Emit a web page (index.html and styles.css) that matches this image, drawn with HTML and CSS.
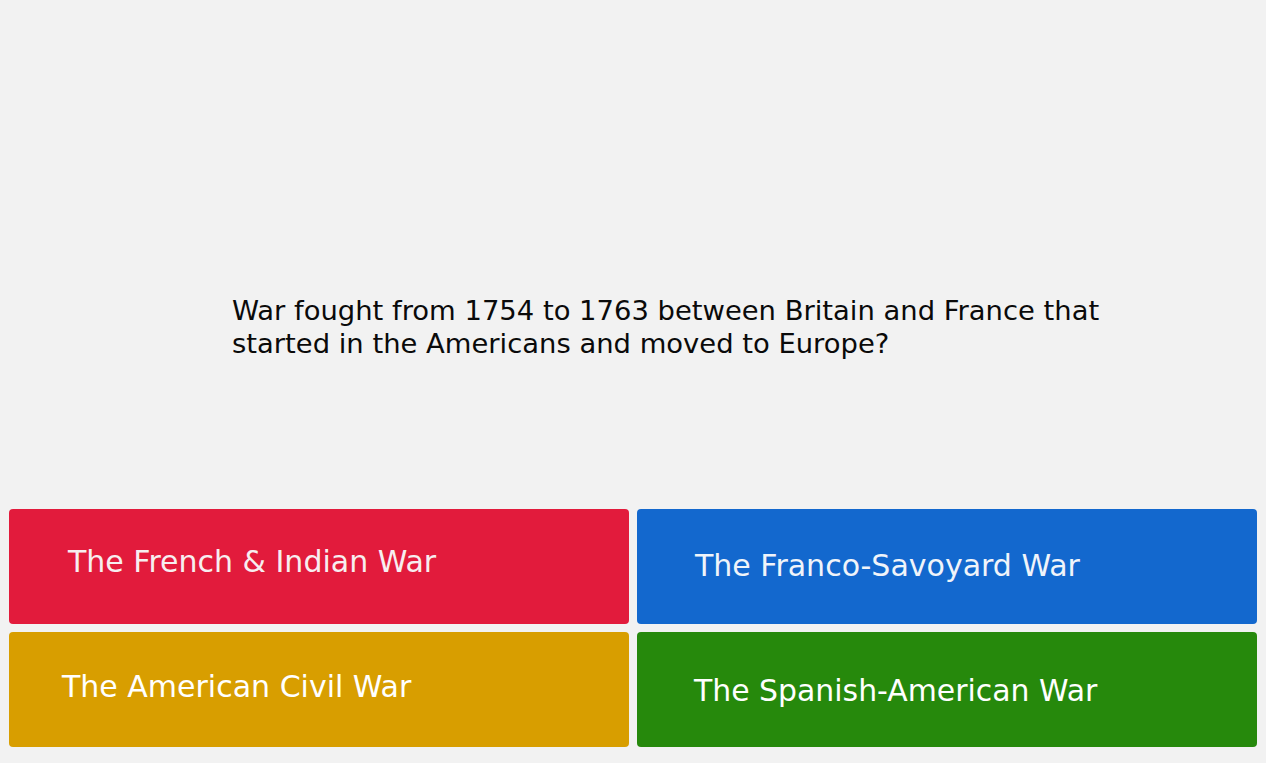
FILE: index.html
```html
<!DOCTYPE html>
<html>
<head>
<meta charset="utf-8">
<link rel="stylesheet" href="styles.css">
</head>
<body>
<main class="page">
  <section class="question-area">
    <p class="question">War fought from 1754 to 1763 between Britain and France that started in the Americans and moved to Europe?</p>
  </section>
  <section class="answers">
    <div class="answer red"><span>The French &amp; Indian War</span></div>
    <div class="answer blue"><span>The Franco-Savoyard War</span></div>
    <div class="answer yellow"><span>The American Civil War</span></div>
    <div class="answer green"><span>The Spanish-American War</span></div>
  </section>
</main>
</body>
</html>
```
FILE: styles.css
```css
* { box-sizing: border-box; }
html, body {
  margin: 0;
  padding: 0;
  background: #f2f2f2;
  font-family: "DejaVu Sans", sans-serif;
}
.page {
  width: 1266px;
  height: 763px;
  display: flex;
  flex-direction: column;
  padding: 0 9px 16px 9px;
}
.question-area {
  flex: 1;
  display: flex;
  align-items: center;
  padding-left: 223px;
  padding-top: 144px;
}
.question {
  margin: 0;
  width: 900px;
  font-size: 27.4px;
  line-height: 33px;
  color: #0a0a0a;
}
.answers {
  display: grid;
  grid-template-columns: 620px 620px;
  grid-template-rows: 115px 115px;
  column-gap: 8px;
  row-gap: 8px;
}
.answer {
  border-radius: 4px;
  display: flex;
  align-items: center;
  color: #fff;
  font-size: 30px;
}
.red { background: #e21b3c; padding-left: 59px; padding-bottom: 11px; color: #f7eef0; }
.blue { background: #1368ce; padding-left: 58px; padding-bottom: 3px; color: #f0f4fa; }
.yellow { background: #d89e00; padding-left: 53px; padding-bottom: 7px; }
.green { background: #26890c; padding-left: 57px; padding-top: 2px; font-size: 29.9px; }
```
